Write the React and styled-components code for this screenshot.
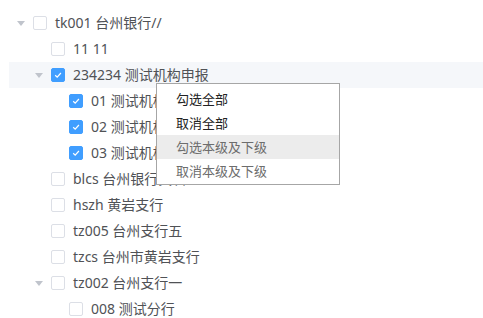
import React from 'react';
import styled, { createGlobalStyle } from 'styled-components';

const GlobalStyle = createGlobalStyle`
  html, body {
    margin: 0;
    padding: 0;
    background: #fff;
    overflow: hidden;
  }
  body {
    font-family: "Noto Sans", "Noto Sans CJK SC", sans-serif;
  }
`;

const Page = styled.div`
  position: relative;
  width: 483px;
  height: 318px;
  padding: 10px 0 0 9px;
  box-sizing: border-box;
  overflow: hidden;
`;

const Tree = styled.div`
  display: flex;
  flex-direction: column;
`;

const Row = styled.div`
  display: flex;
  align-items: center;
  height: 26px;
  padding-left: ${p => p.level * 18}px;
  background: ${p => (p.active ? '#f5f7fa' : 'transparent')};
  color: #505256;
  font-size: 14px;
  white-space: nowrap;
`;

const Caret = styled.span`
  width: 24px;
  height: 24px;
  display: flex;
  align-items: center;
  justify-content: center;
  flex-shrink: 0;

  &::before {
    content: '';
    display: ${p => (p.leaf ? 'none' : 'block')};
    width: 0;
    height: 0;
    border-left: 4px solid transparent;
    border-right: 4px solid transparent;
    border-top: 5px solid #c0c4cc;
    margin-left: -1px;
  }
`;

const Box = styled.span`
  width: 14px;
  height: 14px;
  box-sizing: border-box;
  border: 1px solid ${p => (p.checked ? '#409eff' : '#dcdfe6')};
  background: ${p => (p.checked ? '#409eff' : '#fff')};
  border-radius: 2px;
  margin-right: 8px;
  flex-shrink: 0;
  display: flex;
  align-items: center;
  justify-content: center;
`;

const Label = styled.span`
  line-height: 26px;
`;

const Menu = styled.div`
  position: absolute;
  left: 156px;
  top: 83px;
  width: 184px;
  box-sizing: border-box;
  padding: 3px 0 1px;
  background: #fff;
  border: 1px solid #a6a6a6;
  display: flex;
  flex-direction: column;
`;

const MenuItem = styled.div`
  height: 24px;
  line-height: 24px;
  padding-left: 19px;
  font-size: 13px;
  color: ${p => (p.dim ? '#6d6d6d' : '#222')};
  background: ${p => (p.hover ? '#ececec' : 'transparent')};
`;

const Check = () => (
  <svg width="10" height="10" viewBox="0 0 10 10">
    <path d="M2.2 5.2 L4.2 7.1 L7.9 3" fill="none" stroke="#fff" strokeWidth="1.2" />
  </svg>
);

const nodes = [
  { level: 0, text: 'tk001 台州银行//' },
  { level: 1, text: '11 11', leaf: true },
  { level: 1, text: '234234 测试机构申报', checked: true, active: true },
  { level: 2, text: '01 测试机构', leaf: true, checked: true },
  { level: 2, text: '02 测试机构', leaf: true, checked: true },
  { level: 2, text: '03 测试机构', leaf: true, checked: true },
  { level: 1, text: 'blcs 台州银行黄岩', leaf: true },
  { level: 1, text: 'hszh 黄岩支行', leaf: true },
  { level: 1, text: 'tz005 台州支行五', leaf: true },
  { level: 1, text: 'tzcs 台州市黄岩支行', leaf: true },
  { level: 1, text: 'tz002 台州支行一' },
  { level: 2, text: '008 测试分行', leaf: true },
];

const menu = ['勾选全部', '取消全部', '勾选本级及下级', '取消本级及下级'];

export default function App() {
  return (
    <Page>
      <GlobalStyle />
      <Tree>
        {nodes.map((n, i) => (
          <Row key={i} level={n.level} active={n.active}>
            <Caret leaf={n.leaf} />
            <Box checked={n.checked}>{n.checked && <Check />}</Box>
            <Label>{n.text}</Label>
          </Row>
        ))}
      </Tree>
      <Menu>
        {menu.map((m, i) => (
          <MenuItem key={m} hover={i === 2} dim={i >= 2}>{m}</MenuItem>
        ))}
      </Menu>
    </Page>
  );
}
